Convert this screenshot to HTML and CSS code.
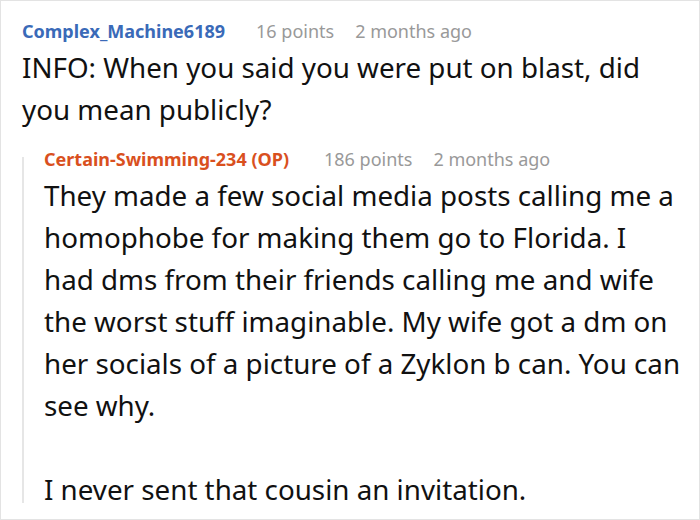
FILE: index.html
```html
<!DOCTYPE html>
<html>
<head>
<meta charset="utf-8">
<link rel="stylesheet" href="styles.css">
</head>
<body>
<div class="frame">
  <div class="comment">
    <div class="meta">
      <span class="user user-blue">Complex_Machine6189</span>
      <span class="info">16 points</span>
      <span class="info">2 months ago</span>
    </div>
    <div class="body">INFO: When you said you were put on blast, did<br>you mean publicly?</div>
    <div class="reply">
      <div class="thread-line"></div>
      <div class="reply-content">
        <div class="meta">
          <span class="user user-op">Certain-Swimming-234 (OP)</span>
          <span class="info">186 points</span>
          <span class="info">2 months ago</span>
        </div>
        <div class="body">
          <p>They made a few social media posts calling me a<br>homophobe for making them go to Florida. I<br>had dms from their friends calling me and wife<br>the worst stuff imaginable. My wife got a dm on<br>her socials of a picture of a Zyklon b can. You can<br>see why.</p>
          <p>I never sent that cousin an invitation.</p>
        </div>
      </div>
    </div>
  </div>
</div>
</body>
</html>
```
FILE: styles.css
```css
html, body {
  margin: 0;
  padding: 0;
  background: #ffffff;
}
.frame {
  box-sizing: border-box;
  width: 700px;
  height: 520px;
  border: 1px solid #e3e3e3;
  overflow: hidden;
  font-family: "Noto Sans", "Open Sans", sans-serif;
  color: #111111;
}
.comment {
  padding: 18px 0 0 21px;
}
.meta {
  display: flex;
  gap: 21px;
  font-size: 18px;
  line-height: 24px;
  white-space: nowrap;
}
.user {
  font-weight: 700;
}
.user-blue { color: #3a6ab8; margin-right: 10px; }
.user-op { color: #d9501e; margin-right: 14px; }
.info { color: #999999; }
.body {
  font-size: 27.75px;
  line-height: 42px;
  margin-top: 3px;
  white-space: nowrap;
}
.body p { margin: 0; }
.body p + p { margin-top: 42px; }
.reply {
  display: flex;
  margin-top: 17px;
}
.thread-line {
  flex: 0 0 2px;
  background: #e6e6e6;
  margin-top: 10px;
  margin-bottom: 7px;
}
.reply-content {
  flex: 1;
  padding-left: 20px;
}
```
